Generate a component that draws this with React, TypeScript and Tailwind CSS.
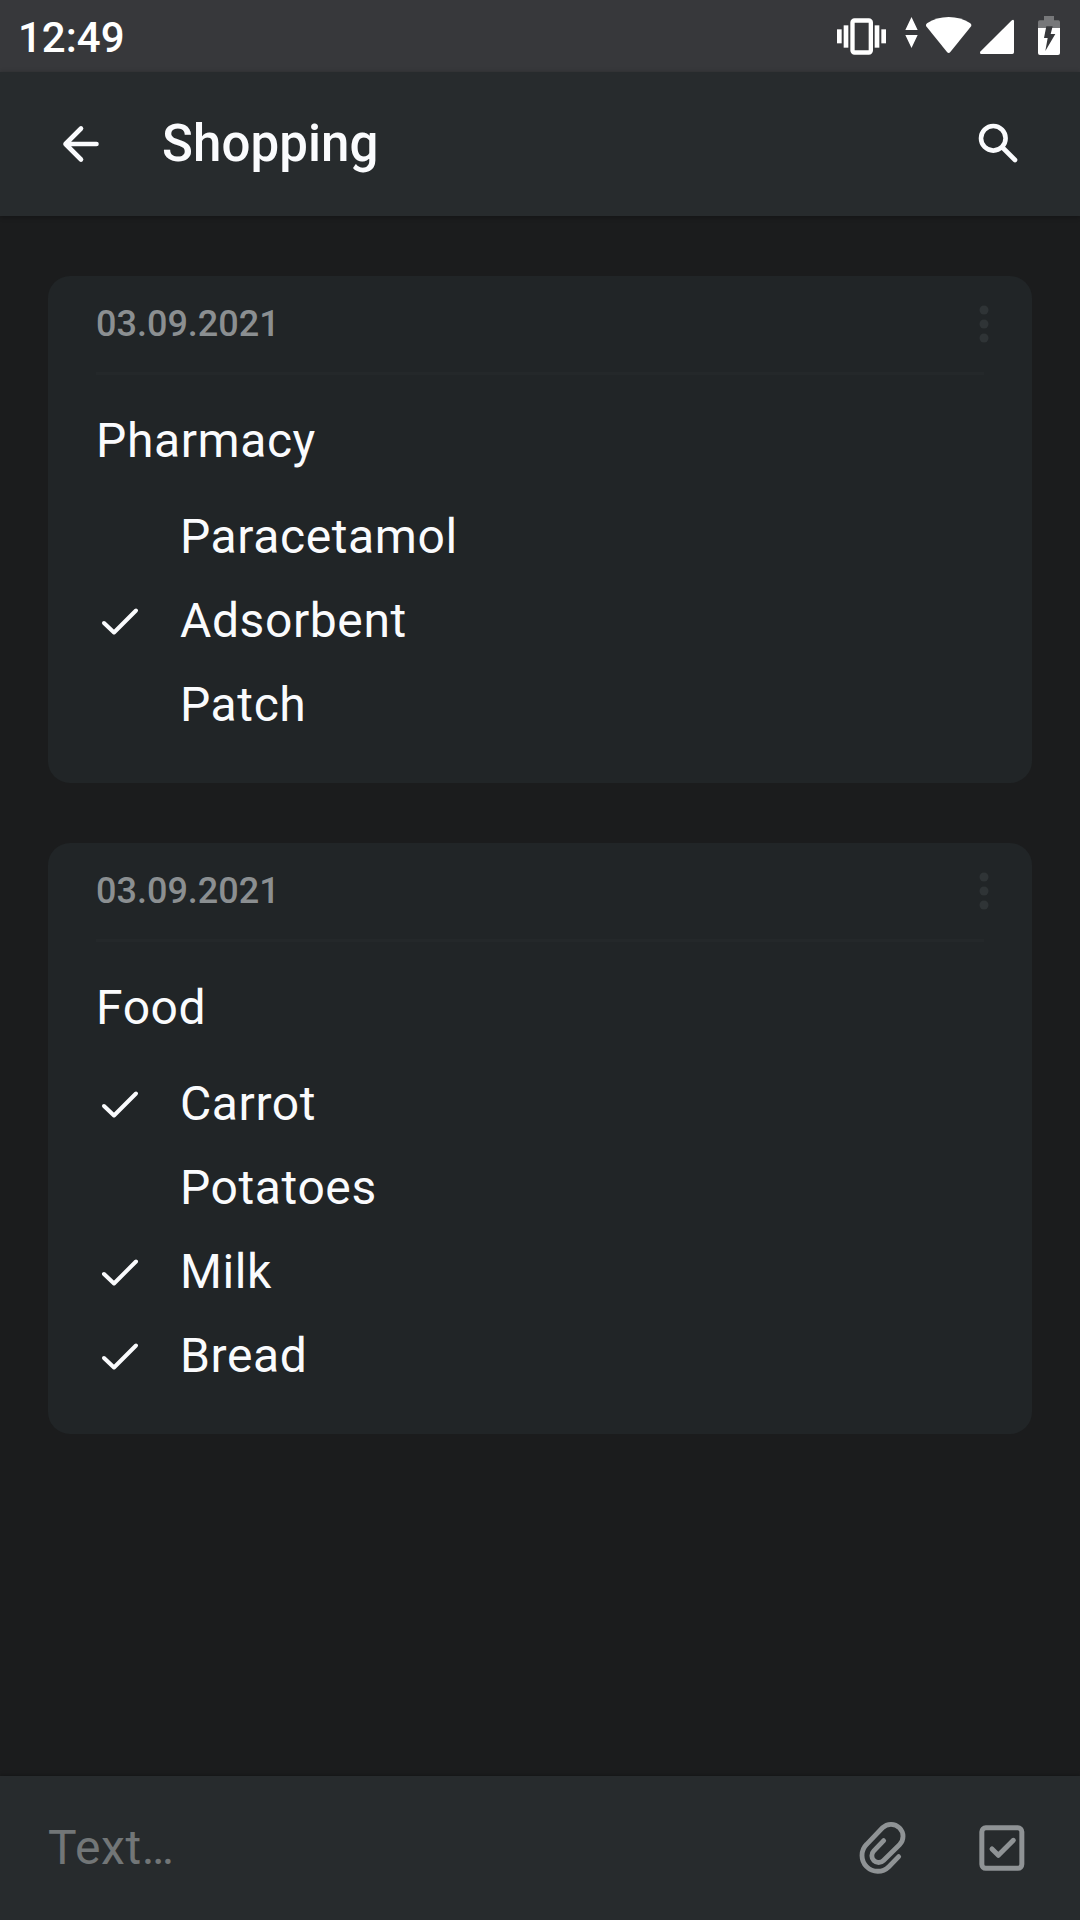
type Item = { label: string; done: boolean };
type Note = { date: string; title: string; items: Item[] };

const notes: Note[] = [
  {
    date: "03.09.2021",
    title: "Pharmacy",
    items: [
      { label: "Paracetamol", done: false },
      { label: "Adsorbent", done: true },
      { label: "Patch", done: false },
    ],
  },
  {
    date: "03.09.2021",
    title: "Food",
    items: [
      { label: "Carrot", done: true },
      { label: "Potatoes", done: false },
      { label: "Milk", done: true },
      { label: "Bread", done: true },
    ],
  },
];

function StatusBar() {
  return (
    <div className="flex h-[72px] shrink-0 items-center justify-between bg-[#37383b] pl-[18px] pr-[6px]">
      <span className="pt-[3px] text-[42px] leading-[72px] font-medium text-white">12:49</span>
      <div className="flex h-[72px] text-white">
        {/* Vibrate */}
        <svg className="h-[72px] w-[64px]" viewBox="36 0 192 216" fill="currentColor">
          <rect x="97.500" y="61.500" width="55" height="96" rx="6" fill="none" stroke="currentColor" strokeWidth="13" />
          <rect x="71" y="76" width="14" height="67" />
          <rect x="164" y="76" width="14" height="67" />
          <rect x="51" y="88" width="14" height="42" />
          <rect x="184" y="88" width="14" height="42" />
        </svg>
        {/* Wi-Fi with traffic arrows */}
        <svg className="h-[72px] w-[80px]" viewBox="228 0 240 216" fill="currentColor">
          <path d="M274.500 51L293 90H256ZM256 105H293L274.500 144Z" />
          <path d="M318 78Q317 73 321 70Q350 51 386 51Q422 51 451 70Q455 73 454 78L391 156Q386 162 381 156Z" />
        </svg>
        {/* Signal */}
        <svg className="h-[72px] w-[52px]" viewBox="468 0 156 216" fill="currentColor">
          <path d="M574 62Q582 56 582 64V157Q582 162 577 162H484Q477 161 482 154Z" />
        </svg>
        {/* Battery, charging */}
        <svg className="h-[72px] w-[46px]" viewBox="624 0 138 216" fill="currentColor">
          <path d="M672 48H702V61H715Q720 61 720 66V84H654V66Q654 61 659 61H672Z" fill="#77787a" />
          <path d="M654 84H720V159Q720 165 714 165H660Q654 165 654 159Z" />
          <path d="M679 79H698L692 102H706L676 153L683 114H672Z" fill="#37383b" />
        </svg>
      </div>
    </div>
  );
}

function Header() {
  return (
    <header className="z-10 flex h-[144px] shrink-0 items-center bg-[#272b2d] pr-[58px] pl-[57px] text-[#fafbfd] shadow-[0_1px_5px_rgba(0,0,0,0.3)]">
      <svg className="size-[48px]" viewBox="0 0 48 48" fill="none" stroke="currentColor" strokeWidth="4.6" strokeLinecap="round" strokeLinejoin="round">
        <path d="M24 8.500L8.500 24L24 39.500M8.500 24H39.500" />
      </svg>
      <h1 className="ml-[57px] grow text-[51px] leading-[72px] font-medium tracking-[0.1px]">Shopping</h1>
      <svg className="size-[48px]" viewBox="0 0 48 48" fill="none" stroke="currentColor" strokeLinecap="round">
        <circle cx="19.300" cy="18.300" r="12.300" strokeWidth="4.600" />
        <path d="M28.500 27.500L41 40" strokeWidth="4.600" />
      </svg>
    </header>
  );
}

function Check() {
  return (
    <svg className="size-[48px]" viewBox="0 0 48 48" fill="none" stroke="currentColor" strokeWidth="4" strokeLinecap="round" strokeLinejoin="round">
      <path d="M8 27L18 36.500L40 14.500" />
    </svg>
  );
}

function NoteCard({ note }: { note: Note }) {
  return (
    <article className="rounded-[22px] bg-[#212527] px-[48px] pb-[37px]">
      <div className="flex h-[99px] items-center justify-between border-b-[3px] border-[#24282a]">
        <span className="text-[36px] leading-[96px] font-medium text-[#8b8f91]">{note.date}</span>
        <svg className="-mr-[5px] h-[40px] w-[10px]" viewBox="0 0 10 40" fill="#2f3436">
          <circle cx="5" cy="6" r="4.500" />
          <circle cx="5" cy="20" r="4.500" />
          <circle cx="5" cy="34" r="4.500" />
        </svg>
      </div>
      <h2 className="mt-[38px] text-[48px] leading-[56px] tracking-[0.6px] text-[#fafbfd]">{note.title}</h2>
      <ul className="mt-[25px]">
        {note.items.map((item) => (
          <li key={item.label} className="flex h-[84px] items-center gap-[36px] text-[#fafbfd]">
            <span className="size-[48px]">{item.done && <Check />}</span>
            <span className="pt-[2px] text-[48px] leading-[84px] tracking-[0.6px]">{item.label}</span>
          </li>
        ))}
      </ul>
    </article>
  );
}

function Composer() {
  return (
    <footer className="flex h-[144px] shrink-0 items-center gap-[60px] bg-[#272b2d] px-[48px] text-[#8f9395] shadow-[0_-1px_4px_rgba(0,0,0,0.25)]">
      <span className="grow text-[48px] leading-[72px] tracking-[0.6px] text-[#727677]">Text…</span>
      <svg className="size-[60px]" viewBox="96 174 180 180" fill="none" stroke="currentColor" strokeWidth="14.500" strokeLinecap="round">
        <path d="M191 242L161.500 272.500A20.500 20.500 0 0 0 190.500 301.500L238.500 254.500A36 36 0 0 0 187.500 203.500L140 253A47 47 0 0 0 206.500 320L236 290" />
      </svg>
      <svg className="size-[60px]" viewBox="456 174 180 180" fill="none" stroke="currentColor" strokeWidth="15" strokeLinecap="round" strokeLinejoin="round">
        <rect x="485.500" y="203.500" width="120" height="121.500" rx="12" />
        <path d="M516 267L535 286L580 241" />
      </svg>
    </footer>
  );
}

export default function App() {
  return (
    <div className="flex h-[1920px] w-[1080px] flex-col overflow-hidden bg-[#1b1c1d] font-['Roboto',sans-serif]">
      <StatusBar />
      <Header />
      <main className="flex grow flex-col gap-[60px] px-[48px] pt-[60px]">
        {notes.map((note) => (
          <NoteCard key={note.title} note={note} />
        ))}
      </main>
      <Composer />
    </div>
  );
}
